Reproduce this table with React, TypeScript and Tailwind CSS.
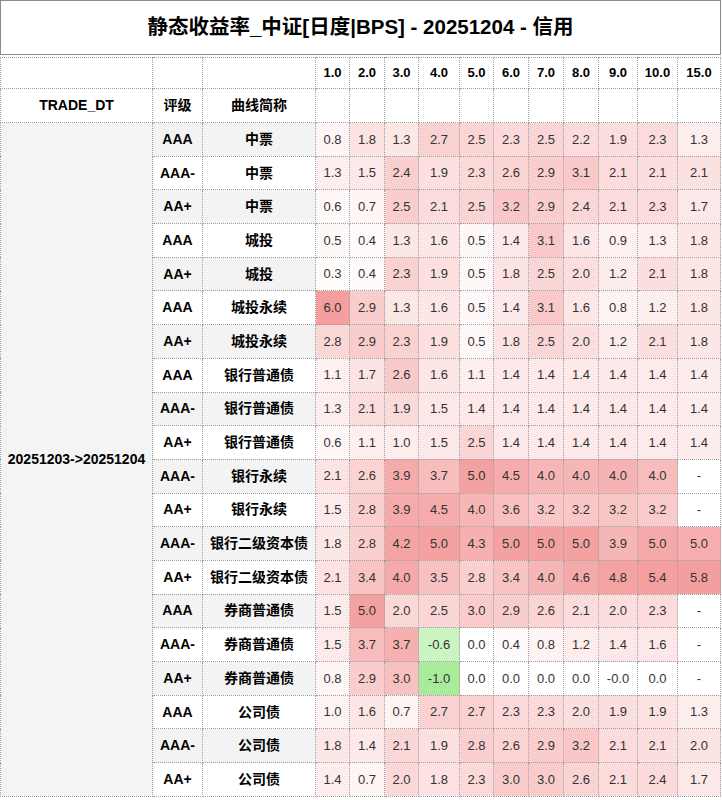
import React from "react"

const tenors = ["1.0", "2.0", "3.0", "4.0", "5.0", "6.0", "7.0", "8.0", "9.0", "10.0", "15.0"]
const colWidths = [34, 35, 34, 41, 34, 35, 35, 35, 39, 40, 43]

type Row = { rating: string; name: string; values: string[] }

const rows: Row[] = [
  { rating: "AAA", name: "中票", values: ["0.8", "1.8", "1.3", "2.7", "2.5", "2.3", "2.5", "2.2", "1.9", "2.3", "1.3"] },
  { rating: "AAA-", name: "中票", values: ["1.3", "1.5", "2.4", "1.9", "2.3", "2.6", "2.9", "3.1", "2.1", "2.1", "2.1"] },
  { rating: "AA+", name: "中票", values: ["0.6", "0.7", "2.5", "2.1", "2.5", "3.2", "2.9", "2.4", "2.1", "2.3", "1.7"] },
  { rating: "AAA", name: "城投", values: ["0.5", "0.4", "1.3", "1.6", "0.5", "1.4", "3.1", "1.6", "0.9", "1.3", "1.8"] },
  { rating: "AA+", name: "城投", values: ["0.3", "0.4", "2.3", "1.9", "0.5", "1.8", "2.5", "2.0", "1.2", "2.1", "1.8"] },
  { rating: "AAA", name: "城投永续", values: ["6.0", "2.9", "1.3", "1.6", "0.5", "1.4", "3.1", "1.6", "0.8", "1.2", "1.8"] },
  { rating: "AA+", name: "城投永续", values: ["2.8", "2.9", "2.3", "1.9", "0.5", "1.8", "2.5", "2.0", "1.2", "2.1", "1.8"] },
  { rating: "AAA", name: "银行普通债", values: ["1.1", "1.7", "2.6", "1.6", "1.1", "1.4", "1.4", "1.4", "1.4", "1.4", "1.4"] },
  { rating: "AAA-", name: "银行普通债", values: ["1.3", "2.1", "1.9", "1.5", "1.4", "1.4", "1.4", "1.4", "1.4", "1.4", "1.4"] },
  { rating: "AA+", name: "银行普通债", values: ["0.6", "1.1", "1.0", "1.5", "2.5", "1.4", "1.4", "1.4", "1.4", "1.4", "1.4"] },
  { rating: "AAA-", name: "银行永续", values: ["2.1", "2.6", "3.9", "3.7", "5.0", "4.5", "4.0", "4.0", "4.0", "4.0", "-"] },
  { rating: "AA+", name: "银行永续", values: ["1.5", "2.8", "3.9", "4.5", "4.0", "3.6", "3.2", "3.2", "3.2", "3.2", "-"] },
  { rating: "AAA-", name: "银行二级资本债", values: ["1.8", "2.8", "4.2", "5.0", "4.3", "5.0", "5.0", "5.0", "3.9", "5.0", "5.0"] },
  { rating: "AA+", name: "银行二级资本债", values: ["2.1", "3.4", "4.0", "3.5", "2.8", "3.4", "4.0", "4.6", "4.8", "5.4", "5.8"] },
  { rating: "AAA", name: "券商普通债", values: ["1.5", "5.0", "2.0", "2.5", "3.0", "2.9", "2.6", "2.1", "2.0", "2.3", "-"] },
  { rating: "AAA-", name: "券商普通债", values: ["1.5", "3.7", "3.7", "-0.6", "0.0", "0.4", "0.8", "1.2", "1.4", "1.6", "-"] },
  { rating: "AA+", name: "券商普通债", values: ["0.8", "2.9", "3.0", "-1.0", "0.0", "0.0", "0.0", "0.0", "-0.0", "0.0", "-"] },
  { rating: "AAA", name: "公司债", values: ["1.0", "1.6", "0.7", "2.7", "2.7", "2.3", "2.3", "2.0", "1.9", "1.9", "1.3"] },
  { rating: "AAA-", name: "公司债", values: ["1.8", "1.4", "2.1", "1.9", "2.8", "2.6", "2.9", "3.2", "2.1", "2.1", "2.0"] },
  { rating: "AA+", name: "公司债", values: ["1.4", "0.7", "2.0", "1.8", "2.3", "3.0", "3.0", "2.6", "2.1", "2.4", "1.7"] },
]

// per-column extremes for the colour scale
const colMax = tenors.map((_, i) =>
  Math.max(...rows.map((r) => parseFloat(r.values[i])).filter((v) => !isNaN(v)))
)
const colMin = tenors.map((_, i) =>
  Math.min(...rows.map((r) => parseFloat(r.values[i])).filter((v) => !isNaN(v)))
)

function heat(value: string, col: number) {
  const v = parseFloat(value)
  if (isNaN(v) || v === 0) return "#ffffff"
  const mix = (a: number, b: number, t: number) => Math.round(a + (b - a) * t)
  if (v > 0) {
    // columns whose top is well under the table max stay a bit lighter
    const t = Math.pow(v / colMax[col], 1.15) * (0.8 + 0.2 * (colMax[col] / 6))
    return `rgb(${mix(255, 244, t)},${mix(255, 158, t)},${mix(255, 158, t)})`
  }
  const t = colMin[col] < 0 ? v / colMin[col] : 0
  return `rgb(${mix(255, 168, t)},${mix(255, 236, t)},${mix(255, 155, t)})`
}

const cell = "border border-dotted border-[#a0a0a0] text-center align-middle p-0"

export default function App() {
  return (
    <div
      className="w-[722px] h-[800px] overflow-hidden bg-white text-black"
      style={{ fontFamily: '"Liberation Sans", "Noto Sans CJK SC", sans-serif' }}
    >
      {/* Title */}
      <div className="h-[55px] w-[721px] border border-[#8a8a8a] flex items-center justify-center">
        <h1 className="text-[20.5px] font-bold">静态收益率_中证[日度|BPS] - 20251204 - 信用</h1>
      </div>

      {/* Table */}
      <table className="mt-[2px] w-[720px] table-fixed border-collapse text-[13px]">
        <colgroup>
          <col className="w-[152px]" />
          <col className="w-[50px]" />
          <col className="w-[113px]" />
          {colWidths.map((w, i) => (
            <col key={i} style={{ width: w }} />
          ))}
        </colgroup>
        <thead>
          <tr className="h-[31px]">
            <th className={cell}></th>
            <th className={cell}></th>
            <th className={cell}></th>
            {tenors.map((t) => (
              <th key={t} className={`${cell} font-bold`}>
                {t}
              </th>
            ))}
          </tr>
          <tr className="h-[34px]">
            <th className={`${cell} font-bold text-[14px]`}>TRADE_DT</th>
            <th className={`${cell} font-bold text-[14px]`}>评级</th>
            <th className={`${cell} font-bold text-[14px]`}>曲线简称</th>
            {tenors.map((t) => (
              <th key={t} className={cell}></th>
            ))}
          </tr>
        </thead>
        <tbody>
          {rows.map((row, r) => (
            <tr key={r} className="h-[33.7px]">
              {r === 0 && (
                <td rowSpan={rows.length} className={`${cell} bg-[#f4f4f4] font-bold text-[14px]`}>
                  20251203-&gt;20251204
                </td>
              )}
              <td className={`${cell} font-bold text-[14px] ${r % 2 === 0 ? "bg-[#f3f3f3]" : "bg-white"}`}>
                {row.rating}
              </td>
              <td className={`${cell} font-bold text-[14px] ${r % 2 === 0 ? "bg-[#f3f3f3]" : "bg-white"}`}>
                {row.name}
              </td>
              {row.values.map((v, i) => (
                <td key={i} className={`${cell} text-[#333333]`} style={{ backgroundColor: heat(v, i) }}>
                  {v}
                </td>
              ))}
            </tr>
          ))}
        </tbody>
      </table>
    </div>
  )
}
